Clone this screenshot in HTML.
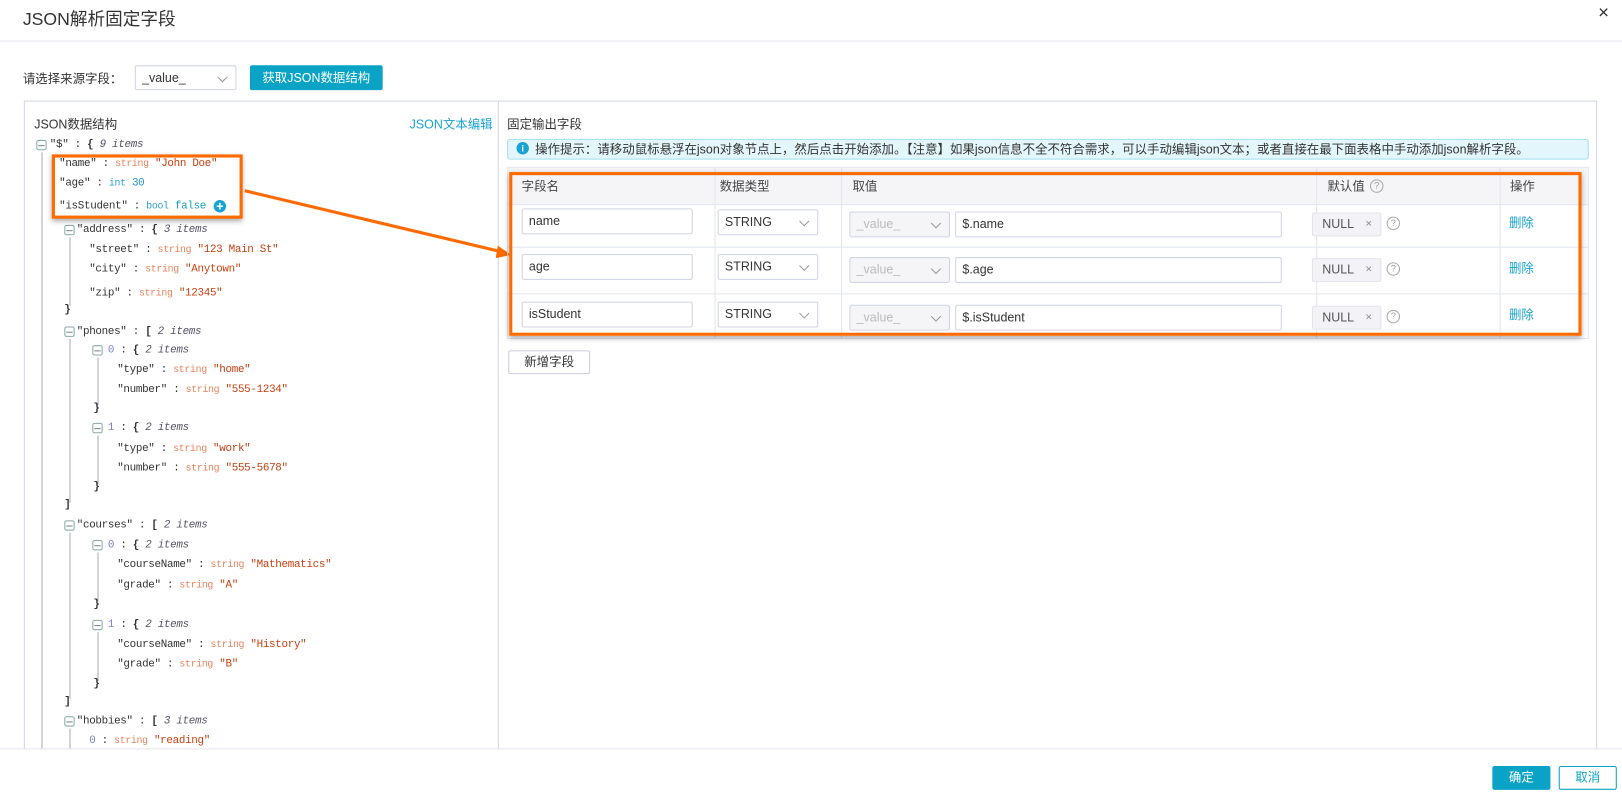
<!DOCTYPE html>
<html><head><meta charset="utf-8"><style>
*{box-sizing:border-box;margin:0;padding:0}
html,body{width:1622px;height:796px;overflow:hidden;background:#fff}
#w{position:absolute;left:0;top:0;width:1564px;height:768px;transform:scale(1.03708,1.0365);transform-origin:0 0;font-family:"Liberation Sans","Noto Sans CJK SC",sans-serif;color:#333;font-size:12px}
.a{position:absolute}
.t{position:absolute;font-family:"Liberation Mono","Noto Sans CJK SC",monospace;font-size:10.5px;letter-spacing:-0.3px;line-height:16px;white-space:nowrap;color:#333}
.ty{color:#e8825a;font-size:9.5px}
.v{color:#c8400f}
.tn{color:#2a9fd6;font-size:9.5px}
.nv{color:#1e8fd0}
.it{font-style:italic;color:#556}
.idx{color:#7a7fd0}
.tg{position:absolute;width:10px;height:10px;border:1px solid #8aa;border-radius:2px}
.tg:after{content:"";position:absolute;left:1px;right:1px;top:3.5px;height:1px;background:#788}
.vl{position:absolute;width:1px;background:#aab}
.inp{position:absolute;border:1px solid #d0d3e6;border-radius:2px;background:#fff;height:25px;line-height:23px;padding-left:6px;font-size:12px;color:#333}
.sel:after{content:"";position:absolute;right:9px;top:7px;width:6px;height:6px;border-right:1.5px solid #999;border-bottom:1.5px solid #999;transform:rotate(45deg)}
.dis{background:#f5f5f8;color:#bbb}
.hl{position:absolute;height:1px;background:#e3e5ef}
.cl{position:absolute;width:1px;background:#e3e5ef}
.null{position:absolute;width:67px;height:23px;background:#f3f3f7;border:1px solid #e3e3ec;border-radius:2px;font-size:12px;color:#555;line-height:21px;padding-left:9px}
.null b{position:absolute;right:8px;top:0;font-weight:normal;color:#888;font-size:11px}
.q{position:absolute;width:13px;height:13px;border:1px solid #aaa;border-radius:50%;font-size:9px;line-height:11px;text-align:center;color:#999}
.del{position:absolute;color:#1aa3d0;font-size:12px}
</style></head><body><div id="w">
<div class="a" style="left:22px;top:4px;font-size:17px;color:#333">JSON解析固定字段</div>
<div class="a" style="left:1541px;top:2px;font-size:18px;color:#333">×</div>
<div class="hl" style="left:0;top:39px;width:1564px;background:#e8e8ef"></div>

<div class="a" style="left:22px;top:67px">请选择来源字段：</div>
<div class="inp sel" style="left:130px;top:63px;width:98px;height:24px">_value_</div>
<div class="a" style="left:241px;top:63px;width:128px;height:24px;background:#0aa3c5;border-radius:2px;color:#fff;text-align:center;line-height:24px">获取JSON数据结构</div>

<div class="a" style="left:23px;top:97px;width:1517px;height:626px;border:1px solid #d3d6e6;border-bottom:none"></div>
<div class="cl" style="left:480px;top:97px;height:626px;background:#d3d6e6"></div>
<div class="hl" style="left:0;top:722px;width:1564px;background:#e6e6f0"></div>

<div class="a" style="left:33px;top:111px">JSON数据结构</div>
<div class="a" style="left:395px;top:111px;color:#1aa3d0">JSON文本编辑</div>

<div class="vl" style="left:40px;top:147px;height:575px"></div>
<div class="vl" style="left:67px;top:229px;height:66px"></div>
<div class="vl" style="left:67px;top:327px;height:158px"></div>
<div class="vl" style="left:67px;top:514px;height:160px"></div>
<div class="vl" style="left:67px;top:703px;height:19px"></div>
<div class="vl" style="left:94px;top:345px;height:46px"></div>
<div class="vl" style="left:94px;top:420px;height:47px"></div>
<div class="vl" style="left:94px;top:533px;height:47px"></div>
<div class="vl" style="left:94px;top:610px;height:47px"></div>

<div class="tg" style="left:35px;top:135px"></div><div class="t" style="left:48px;top:132px">"$" : <b>{</b>  <span class="it">9 items</span></div>
<div class="t" style="left:57px;top:150px">"name" : <span class="ty">string</span> <span class="v">"John Doe"</span></div>
<div class="t" style="left:57px;top:169px">"age" : <span class="tn">int</span> <span class="nv">30</span></div>
<div class="t" style="left:57px;top:191px">"isStudent" : <span class="tn">bool</span> <span class="nv" style="color:#1a9fc0">false</span></div>
<div class="a" style="left:206px;top:193px;width:12px;height:12px;border-radius:50%;background:#1aa3d0;color:#fff;font-size:12px;line-height:12px;text-align:center;font-weight:bold">+</div>

<div class="tg" style="left:62px;top:217px"></div><div class="t" style="left:74px;top:214px">"address" : <b>{</b>  <span class="it">3 items</span></div>
<div class="t" style="left:86px;top:233px">"street" : <span class="ty">string</span> <span class="v">"123 Main St"</span></div>
<div class="t" style="left:86px;top:252px">"city" : <span class="ty">string</span> <span class="v">"Anytown"</span></div>
<div class="t" style="left:86px;top:275px">"zip" : <span class="ty">string</span> <span class="v">"12345"</span></div>
<div class="t" style="left:62px;top:291px"><b>}</b></div>

<div class="tg" style="left:62px;top:315px"></div><div class="t" style="left:74px;top:312px">"phones" : <b>[</b>  <span class="it">2 items</span></div>
<div class="tg" style="left:89px;top:333px"></div><div class="t" style="left:104px;top:330px"><span class="idx">0</span> : <b>{</b>  <span class="it">2 items</span></div>
<div class="t" style="left:113px;top:349px">"type" : <span class="ty">string</span> <span class="v">"home"</span></div>
<div class="t" style="left:113px;top:368px">"number" : <span class="ty">string</span> <span class="v">"555-1234"</span></div>
<div class="t" style="left:90px;top:386px"><b>}</b></div>
<div class="tg" style="left:89px;top:408px"></div><div class="t" style="left:104px;top:405px"><span class="idx">1</span> : <b>{</b>  <span class="it">2 items</span></div>
<div class="t" style="left:113px;top:425px">"type" : <span class="ty">string</span> <span class="v">"work"</span></div>
<div class="t" style="left:113px;top:444px">"number" : <span class="ty">string</span> <span class="v">"555-5678"</span></div>
<div class="t" style="left:90px;top:462px"><b>}</b></div>
<div class="t" style="left:62px;top:479px"><b>]</b></div>

<div class="tg" style="left:62px;top:502px"></div><div class="t" style="left:74px;top:499px">"courses" : <b>[</b>  <span class="it">2 items</span></div>
<div class="tg" style="left:89px;top:521px"></div><div class="t" style="left:104px;top:518px"><span class="idx">0</span> : <b>{</b>  <span class="it">2 items</span></div>
<div class="t" style="left:113px;top:537px">"courseName" : <span class="ty">string</span> <span class="v">"Mathematics"</span></div>
<div class="t" style="left:113px;top:557px">"grade" : <span class="ty">string</span> <span class="v">"A"</span></div>
<div class="t" style="left:90px;top:575px"><b>}</b></div>
<div class="tg" style="left:89px;top:598px"></div><div class="t" style="left:104px;top:595px"><span class="idx">1</span> : <b>{</b>  <span class="it">2 items</span></div>
<div class="t" style="left:113px;top:614px">"courseName" : <span class="ty">string</span> <span class="v">"History"</span></div>
<div class="t" style="left:113px;top:633px">"grade" : <span class="ty">string</span> <span class="v">"B"</span></div>
<div class="t" style="left:90px;top:652px"><b>}</b></div>
<div class="t" style="left:62px;top:669px"><b>]</b></div>
<div class="tg" style="left:62px;top:691px"></div><div class="t" style="left:74px;top:688px">"hobbies" : <b>[</b>  <span class="it">3 items</span></div>
<div class="t" style="left:86px;top:707px"><span class="idx">0</span> : <span class="ty">string</span> <span class="v">"reading"</span></div>

<div class="a" style="left:50px;top:149px;width:184px;height:62px;border:3px solid #ff6a00;box-shadow:0 2px 5px rgba(0,0,0,.35)"></div>
<svg class="a" style="left:0;top:0" width="1564" height="768"><line x1="236" y1="184" x2="484" y2="243" stroke="#ff6a00" stroke-width="3"/><polygon points="493,246 480,237 478,249" fill="#ff6a00"/></svg>

<div class="a" style="left:489px;top:111px">固定输出字段</div>
<div class="a" style="left:489px;top:134px;width:1043px;height:20px;background:#e3f6fb;border:1px solid #a3e1f0;border-radius:3px;font-size:12px;line-height:18px;padding-left:26px;color:#333">操作提示：请移动鼠标悬浮在json对象节点上，然后点击开始添加。【注意】如果json信息不全不符合需求，可以手动编辑json文本；或者直接在最下面表格中手动添加json解析字段。</div>
<div class="a" style="left:498px;top:137px;width:12px;height:12px;border-radius:50%;background:#1aa3d0;color:#fff;font-size:9px;line-height:12px;text-align:center;font-weight:bold">i</div>

<div class="a" style="left:489px;top:161px;width:1043px;height:166px;border:1px solid #e3e5ef"></div>
<div class="a" style="left:490px;top:162px;width:1041px;height:35px;background:#f5f5f8"></div>
<div class="hl" style="left:489px;top:197px;width:1043px"></div>
<div class="hl" style="left:489px;top:238px;width:1043px"></div>
<div class="hl" style="left:489px;top:283px;width:1043px"></div>
<div class="cl" style="left:689px;top:161px;height:166px"></div>
<div class="cl" style="left:811px;top:161px;height:166px"></div>
<div class="cl" style="left:1269px;top:161px;height:166px"></div>
<div class="cl" style="left:1446px;top:161px;height:166px"></div>
<div class="a" style="left:503px;top:171px;color:#444">字段名</div>
<div class="a" style="left:694px;top:171px;color:#444">数据类型</div>
<div class="a" style="left:822px;top:171px;color:#444">取值</div>
<div class="a" style="left:1280px;top:171px;color:#444">默认值</div><div class="q" style="left:1321px;top:173px">?</div>
<div class="a" style="left:1456px;top:171px;color:#444">操作</div>

<div class="inp" style="left:503px;top:201px;width:165px">name</div>
<div class="inp sel" style="left:692px;top:202px;width:97px">STRING</div>
<div class="inp sel dis" style="left:819px;top:204px;width:97px">_value_</div>
<div class="inp" style="left:921px;top:204px;width:315px">$.name</div>
<div class="null" style="left:1265px;top:205px">NULL<b>×</b></div><div class="q" style="left:1337px;top:209px">?</div>
<div class="del" style="left:1455px;top:206px">删除</div>

<div class="inp" style="left:503px;top:245px;width:165px">age</div>
<div class="inp sel" style="left:692px;top:245px;width:97px">STRING</div>
<div class="inp sel dis" style="left:819px;top:248px;width:97px">_value_</div>
<div class="inp" style="left:921px;top:248px;width:315px">$.age</div>
<div class="null" style="left:1265px;top:249px">NULL<b>×</b></div><div class="q" style="left:1337px;top:253px">?</div>
<div class="del" style="left:1455px;top:250px">删除</div>

<div class="inp" style="left:503px;top:291px;width:165px">isStudent</div>
<div class="inp sel" style="left:692px;top:291px;width:97px">STRING</div>
<div class="inp sel dis" style="left:819px;top:294px;width:97px">_value_</div>
<div class="inp" style="left:921px;top:294px;width:315px">$.isStudent</div>
<div class="null" style="left:1265px;top:295px">NULL<b>×</b></div><div class="q" style="left:1337px;top:299px">?</div>
<div class="del" style="left:1455px;top:295px">删除</div>

<div class="a" style="left:491px;top:166px;width:1034px;height:158px;border:3px solid #ff6a00;box-shadow:0 2px 5px rgba(0,0,0,.35)"></div>

<div class="a" style="left:490px;top:338px;width:79px;height:23px;border:1px solid #ccd;border-radius:2px;text-align:center;line-height:21px">新增字段</div>

<div class="a" style="left:1439px;top:739px;width:56px;height:23px;background:#0aa3c5;border-radius:2px;color:#fff;text-align:center;line-height:23px">确定</div>
<div class="a" style="left:1503px;top:739px;width:56px;height:23px;border:1px solid #0aa3c5;border-radius:2px;color:#0aa3c5;text-align:center;line-height:21px">取消</div>
</div></body></html>
